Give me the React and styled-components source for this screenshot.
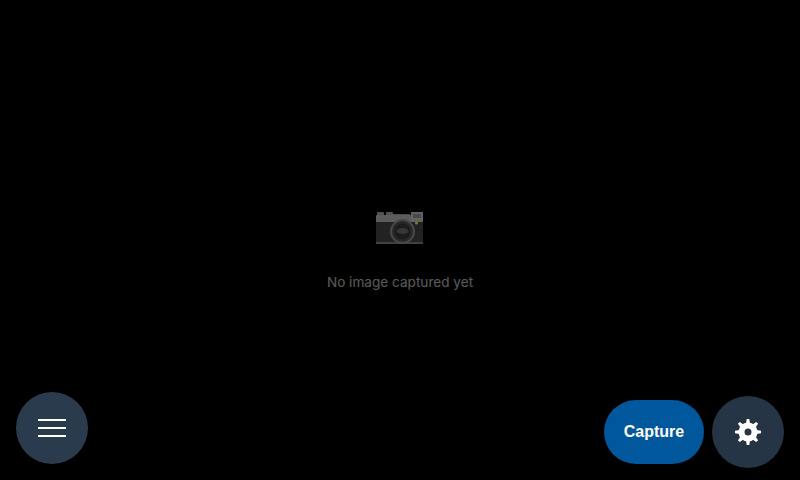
import styled, { createGlobalStyle } from "styled-components";

const GlobalStyle = createGlobalStyle`
  html, body, #root {
    margin: 0;
    width: 100%;
    height: 100%;
    background: #000;
  }
`;

const Screen = styled.div`
  position: relative;
  width: 800px;
  height: 480px;
  overflow: hidden;
  background: #000;
  display: flex;
  align-items: center;
  justify-content: center;
`;

const Empty = styled.div`
  display: flex;
  flex-direction: column;
  align-items: center;
  gap: 26px;
  margin-top: 22px;
`;

const Message = styled.p`
  margin: 0;
  font-family: Inter, "Liberation Sans", sans-serif;
  font-size: 13.6px;
  line-height: 20px;
  color: #fff;
  opacity: 0.35;
`;

const RoundButton = styled.button`
  width: 72px;
  height: 72px;
  padding: 0;
  border: none;
  border-radius: 50%;
  background: ${(p) => p.$bg};
  color: #fff;
  display: flex;
  align-items: center;
  justify-content: center;
`;

const MenuDock = styled.div`
  position: absolute;
  left: 16px;
  bottom: 16px;
`;

const ActionDock = styled.div`
  position: absolute;
  right: 16px;
  bottom: 12px;
  display: flex;
  align-items: flex-end;
  gap: 8px;
`;

const CaptureButton = styled.button`
  width: 100px;
  height: 64px;
  margin-bottom: 4px;
  padding: 0;
  border: none;
  border-radius: 32px;
  background: #01579b;
  color: #fff;
  font-family: "Liberation Sans", Arial, sans-serif;
  font-size: 16px;
  font-weight: 700;
`;

const MenuIcon = () => (
  <svg width="28" height="18" viewBox="0 0 28 18" fill="#fff">
    <rect x="0" y="0" width="28" height="2" />
    <rect x="0" y="8" width="28" height="2" />
    <rect x="0" y="16" width="28" height="2" />
  </svg>
);

const GearIcon = () => (
  <svg width="26" height="26" viewBox="-13 -13 26 26">
    <circle r="6.5" fill="none" stroke="#fff" strokeWidth="6" />
    {[0, 45, 90, 135, 180, 225, 270, 315].map((a) => (
      <path key={a} d="M-2 -8.5 L-1.3 -13 L1.3 -13 L2 -8.5 Z" fill="#fff" transform={`rotate(${a})`} />
    ))}
  </svg>
);

const CameraIcon = () => (
  <svg width="48" height="36" viewBox="377 210 48 36">
    <rect x="378" y="212" width="7" height="5" rx="1" fill="#505050" />
    <rect x="387" y="212" width="7" height="5" rx="1" fill="#505050" />
    <rect x="394" y="214" width="17" height="3" fill="#4a4a4a" />
    <rect x="377" y="215" width="47" height="8" rx="1" fill="#5c5c5c" />
    <rect x="412" y="212" width="12" height="10" fill="#626262" />
    <rect x="414" y="214" width="8" height="4" fill="#484848" />
    <rect x="377" y="222" width="47" height="21" fill="#222" />
    <rect x="377" y="242" width="47" height="2" fill="#404040" />
    <circle cx="403.5" cy="231.5" r="12.5" fill="#484848" />
    <circle cx="403.5" cy="231.5" r="10.5" fill="#282828" />
    <circle cx="403.5" cy="231.5" r="8" fill="#1c1c1c" />
    <ellipse cx="403.5" cy="231" rx="6" ry="3" fill="#363636" />
    <circle cx="417.5" cy="223" r="1.5" fill="#8a7a1c" />
  </svg>
);

export default function App() {
  return (
    <>
      <GlobalStyle />
      <Screen>
        <Empty>
          <CameraIcon />
          <Message>No image captured yet</Message>
        </Empty>
        <MenuDock>
          <RoundButton $bg="#2b3b4e" aria-label="Menu">
            <MenuIcon />
          </RoundButton>
        </MenuDock>
        <ActionDock>
          <CaptureButton>Capture</CaptureButton>
          <RoundButton $bg="#253545" aria-label="Settings">
            <GearIcon />
          </RoundButton>
        </ActionDock>
      </Screen>
    </>
  );
}
